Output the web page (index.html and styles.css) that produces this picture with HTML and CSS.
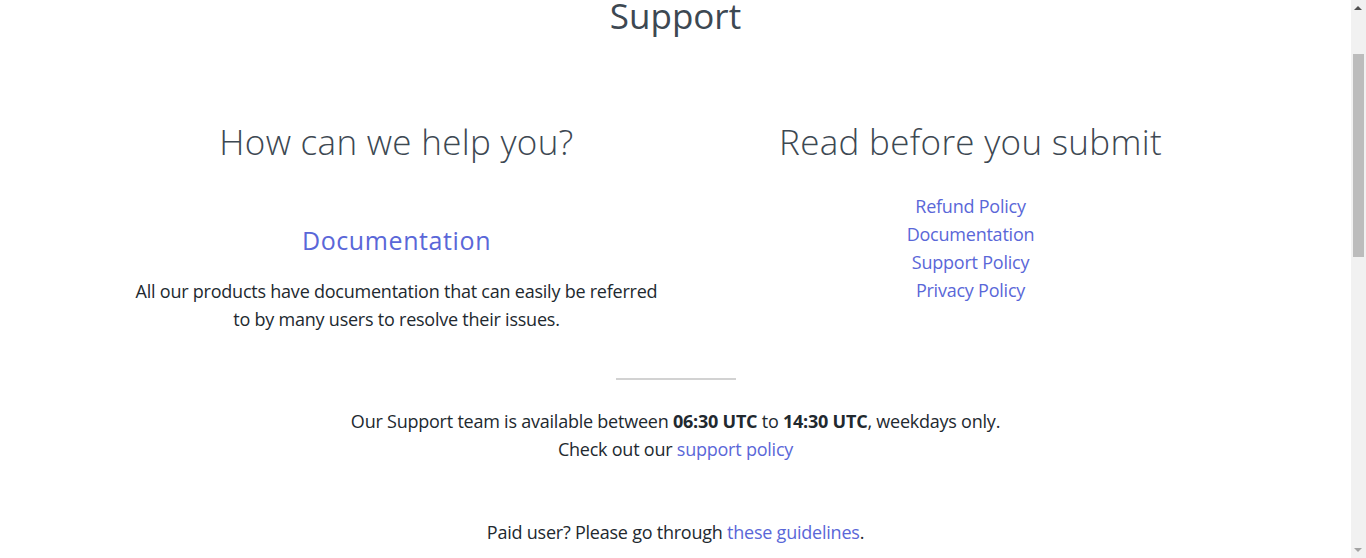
FILE: index.html
```html
<!DOCTYPE html>
<html lang="en">
<head>
<meta charset="utf-8">
<title>Support</title>
<link rel="stylesheet" href="styles.css">
</head>
<body>
<main class="support">
  <h1 class="page-title">Support</h1>
  <div class="columns">
    <section class="col">
      <h2 class="col-title">How can we help you?</h2>
      <div class="help-item">
        <h3 class="help-title"><a href="#">Documentation</a></h3>
        <p class="help-text">All our products have documentation that can easily be referred<br>to by many users to resolve their issues.</p>
      </div>
    </section>
    <section class="col">
      <h2 class="col-title">Read before you submit</h2>
      <ul class="policy-links">
        <li><a href="#">Refund Policy</a></li>
        <li><a href="#">Documentation</a></li>
        <li><a href="#">Support Policy</a></li>
        <li><a href="#">Privacy Policy</a></li>
      </ul>
    </section>
  </div>
  <hr class="divider">
  <p class="hours">Our Support team is available between <strong>06:30 UTC</strong> to <strong>14:30 UTC</strong>, weekdays only.<br>Check out our <a href="#">support policy</a></p>
  <p class="paid">Paid user? Please go through <a href="#">these guidelines</a>.</p>
</main>
<div class="scrollbar" aria-hidden="true">
  <span class="sb-up"></span>
  <span class="sb-thumb"></span>
  <span class="sb-down"></span>
</div>
<script src="script.js"></script>
</body>
</html>
```

FILE: styles.css
```css
html, body {
  margin: 0;
  padding: 0;
  background: #ffffff;
}

body {
  font-family: "Open Sans", "Noto Sans", sans-serif;
  color: #22292f;
  font-size: 18px;
  letter-spacing: -0.23px;
}

a {
  color: #5a67d8;
  text-decoration: none;
}

.support {
  margin-right: 15px;
  padding: 102px 0 797px;
  text-align: center;
}

.page-title {
  margin: 0;
  font-size: 35px;
  line-height: 42px;
  font-weight: 400;
  letter-spacing: 0;
  color: #3d4852;
}

.columns {
  display: grid;
  grid-template-columns: 574px 574px;
  justify-content: center;
  padding-left: 16px;
  margin-top: 85px;
}

.col-title {
  margin: 0;
  font-size: 35px;
  line-height: 40px;
  font-weight: 300;
  letter-spacing: 0.3px;
  color: #3d4852;
}

.help-title {
  margin: 63px 0 0;
  font-size: 25px;
  line-height: 30px;
  font-weight: 400;
  letter-spacing: 0.6px;
}

.help-text {
  margin: 22px 0 0;
  line-height: 28px;
}

.policy-links {
  list-style: none;
  margin: 30px 0 0;
  padding: 0;
  line-height: 28px;
}

.divider {
  width: 120px;
  height: 2px;
  margin: 45px auto 0;
  border: 0;
  background: #d2d2d2;
}

.hours {
  margin: 27px 0 0;
  line-height: 28px;
}

.hours strong {
  font-weight: 700;
}

.paid {
  margin: 55px 0 0;
  line-height: 28px;
}

/* browser scrollbar, as shown in the reference */
.scrollbar {
  position: fixed;
  top: 0;
  right: 0;
  width: 15px;
  height: 100vh;
  background: #f1f1f1;
}

.sb-up,
.sb-down {
  position: absolute;
  left: 3px;
  width: 0;
  height: 0;
  border-left: 4px solid transparent;
  border-right: 4px solid transparent;
}

.sb-up {
  top: 6px;
  border-bottom: 4px solid #505050;
}

.sb-down {
  bottom: 6px;
  border-top: 4px solid #a3a3a3;
}

.sb-thumb {
  position: absolute;
  top: 54px;
  left: 2px;
  width: 11px;
  height: 203px;
  background: #bcbcbc;
}
```

FILE: script.js
```js
window.scrollTo(0, 107);
```
